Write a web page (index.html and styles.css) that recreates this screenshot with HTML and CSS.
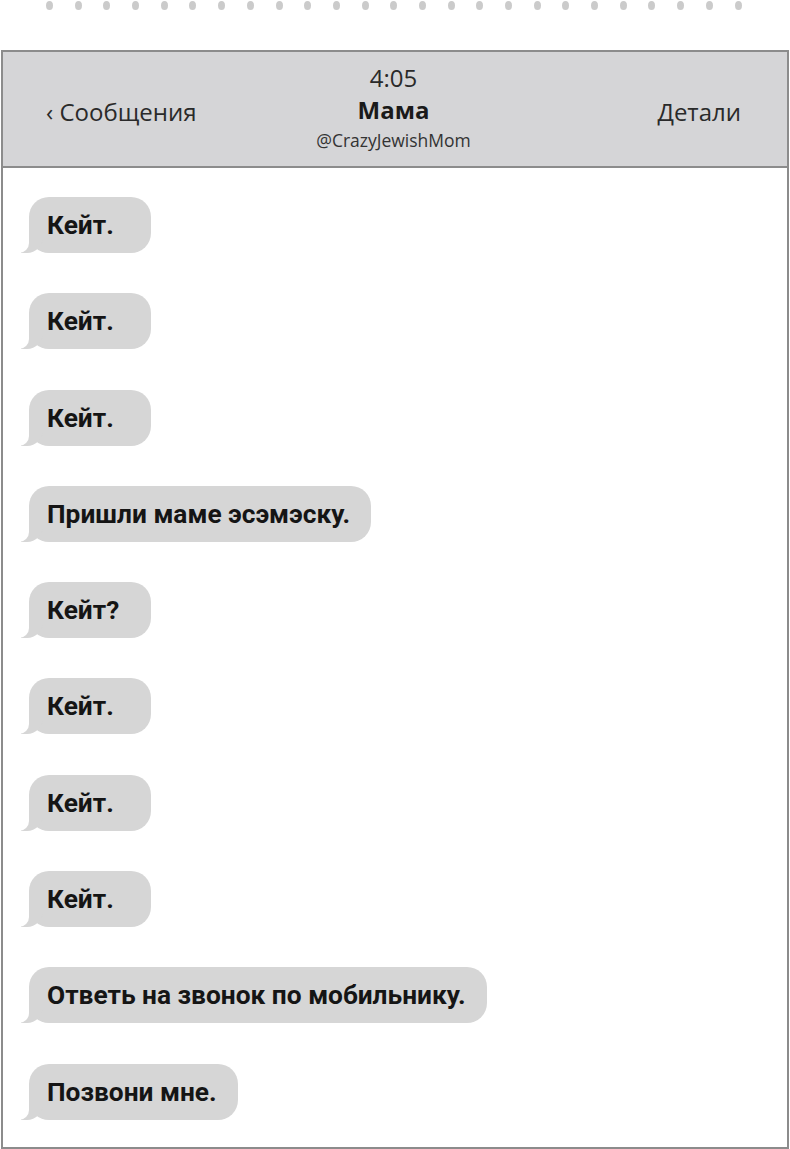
FILE: index.html
```html
<!DOCTYPE html>
<html lang="ru">
<head>
    <meta charset="UTF-8">
    <meta name="viewport" content="width=device-width, initial-scale=1.0">
    <title>Мама</title>
    <link rel="stylesheet" href="styles.css">
</head>
<body>

    <div class="binding">
        <span></span><span></span><span></span><span></span><span></span>
        <span></span><span></span><span></span><span></span><span></span>
        <span></span><span></span><span></span><span></span><span></span>
        <span></span><span></span><span></span><span></span><span></span>
        <span></span><span></span><span></span><span></span><span></span>
    </div>

    <div class="phone">
        <header class="nav">
            <div class="nav-back">‹ Сообщения</div>
            <div class="nav-title">
                <div class="time">4:05</div>
                <div class="name">Мама</div>
                <div class="handle">@CrazyJewishMom</div>
            </div>
            <div class="nav-details">Детали</div>
        </header>

        <main class="thread">
            <div class="bubble">Кейт.</div>
            <div class="bubble">Кейт.</div>
            <div class="bubble">Кейт.</div>
            <div class="bubble">Пришли маме эсэмэску.</div>
            <div class="bubble">Кейт?</div>
            <div class="bubble">Кейт.</div>
            <div class="bubble">Кейт.</div>
            <div class="bubble">Кейт.</div>
            <div class="bubble">Ответь на звонок по мобильнику.</div>
            <div class="bubble">Позвони мне.</div>
        </main>
    </div>

</body>
</html>
```

FILE: styles.css
```css
/* --- Page --- */
body {
    margin: 0;
    background: #ffffff;
    color: #1a1a1a;
    font-family: "Open Sans", "Noto Sans", sans-serif;
}

/* --- Spiral binding dots along the top --- */
.binding {
    display: flex;
    gap: 21.7px;
    padding: 1px 0 0 46px;
    height: 50px;
    box-sizing: border-box;
}

.binding span {
    width: 7px;
    height: 9px;
    border-radius: 50%;
    background: #cbcbcb;
}

/* --- Phone frame --- */
.phone {
    margin-left: 1px;
    width: 788px;
    height: 1099px;
    box-sizing: border-box;
    border: 2px solid #8c8c8c;
    display: flex;
    flex-direction: column;
}

/* --- Top nav --- */
.nav {
    display: grid;
    grid-template-columns: 1fr auto 1fr;
    align-items: center;
    height: 114px;
    padding: 0 46px 0 43px;
    background: #d5d5d7;
    border-bottom: 2px solid #8c8c8c;
    color: #2a2a2a;
}

.nav-back,
.nav-details {
    font-size: 24px;
    padding-top: 4px;
}

.nav-details { text-align: right; }

.nav-title {
    text-align: center;
    line-height: 1;
    padding-bottom: 2px;
}

.time { font-size: 24px; margin-bottom: 8px; }
.name { font-size: 24px; font-weight: 700; color: #1a1a1a; margin-bottom: 10px; }
.handle { font-size: 17.5px; color: #333; }

/* --- Message thread --- */
.thread {
    display: flex;
    flex-direction: column;
    align-items: flex-start;
    gap: 40.3px;
    padding: 29px 0 0 26px;
}

.bubble {
    position: relative;
    box-sizing: border-box;
    min-width: 122px;
    background: #d6d6d6;
    border-radius: 20px;
    padding: 0 21px 0 18px;
    height: 56px;
    line-height: 56px;
    font-family: Roboto, "Open Sans", sans-serif;
    font-size: 26.3px;
    font-weight: 700;
    color: #151515;
}

/* iMessage-style tail */
.bubble::before {
    content: "";
    position: absolute;
    left: -8px;
    bottom: 0;
    width: 22px;
    height: 22px;
    background: #d6d6d6;
    border-bottom-right-radius: 16px;
}

.bubble::after {
    content: "";
    position: absolute;
    left: -10px;
    bottom: 0;
    width: 10px;
    height: 22px;
    background: #ffffff;
    border-bottom-right-radius: 10px;
}
```
